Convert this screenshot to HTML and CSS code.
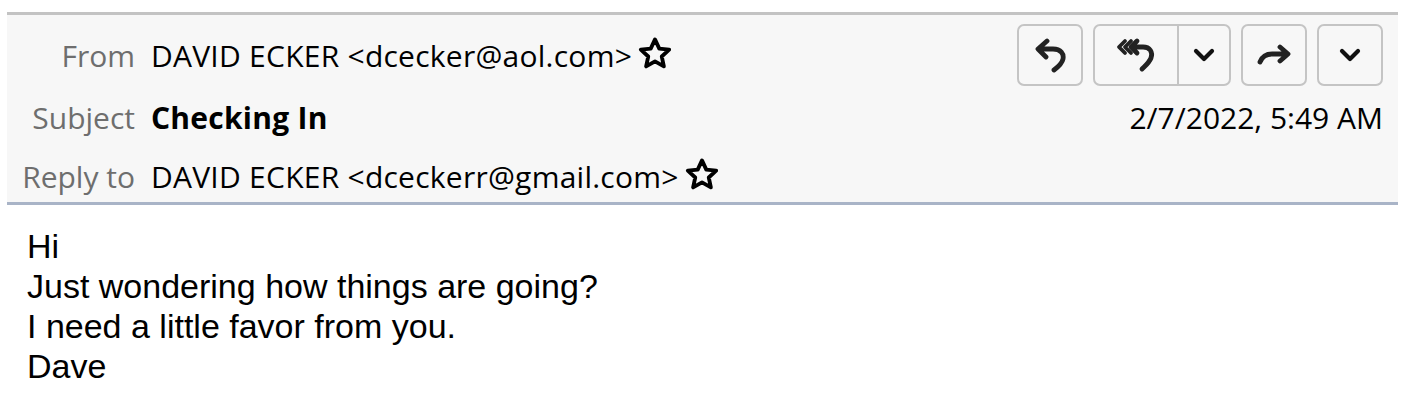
FILE: index.html
```html
<!DOCTYPE html>
<html>
<head>
<meta charset="utf-8">
<link rel="stylesheet" href="styles.css">
</head>
<body>
<div class="header">
  <div class="row row-from">
    <div class="label">From</div>
    <div class="value">DAVID ECKER &lt;dcecker@aol.com&gt;</div>
    <svg class="star" viewBox="0 0 32 32"><path d="M16 3 L19.8 11.2 L28.6 12.1 L22 18.2 L23.9 27 L16 22.5 L8.1 27 L10 18.2 L3.4 12.1 L12.2 11.2 Z" fill="none" stroke="#000" stroke-width="3.4" stroke-linejoin="round"/></svg>
    <div class="buttons">
      <button class="btn">
        <svg class="ico" width="32" height="36" viewBox="0 0 32 36"><path d="M13 4 L4 12 L12 20 M5 12 H19 C27 12 30 17 29 22 C28 27 24 30 20 33" fill="none" stroke="#222" stroke-width="4.8" stroke-linecap="round" stroke-linejoin="round"/></svg>
      </button>
      <div class="split">
        <button class="btn split-main">
          <svg class="ico" width="40" height="36" viewBox="0 0 40 36"><path d="M9 4 L3 10 L9 16 M15 4 L9 10 L15 16" fill="none" stroke="#222" stroke-width="3.8" stroke-linecap="round" stroke-linejoin="round"/><path d="M21 4 L15 10 L21 16 M16 10 H27 C34 10 37 15 35 21 C33 26 29 29 26 32" fill="none" stroke="#222" stroke-width="4.8" stroke-linecap="round" stroke-linejoin="round"/></svg>
        </button>
        <button class="btn split-drop">
          <svg class="chev" width="22" height="14" viewBox="0 0 22 14"><path d="M3 3 L11 11 L19 3" fill="none" stroke="#111" stroke-width="4.2" stroke-linecap="round" stroke-linejoin="round"/></svg>
        </button>
      </div>
      <button class="btn">
        <svg class="ico" width="36" height="24" viewBox="0 0 36 24"><path d="M24 4 L32 11 L24 18 M31 11 H16 C10 11 6 14 4 19" fill="none" stroke="#222" stroke-width="4.8" stroke-linecap="round" stroke-linejoin="round"/></svg>
      </button>
      <button class="btn">
        <svg class="chev" width="22" height="14" viewBox="0 0 22 14"><path d="M3 3 L11 11 L19 3" fill="none" stroke="#111" stroke-width="4.2" stroke-linecap="round" stroke-linejoin="round"/></svg>
      </button>
    </div>
  </div>
  <div class="row row-subject">
    <div class="label">Subject</div>
    <div class="value subject">Checking In</div>
    <div class="date">2/7/2022, 5:49 AM</div>
  </div>
  <div class="row row-reply">
    <div class="label">Reply to</div>
    <div class="value">DAVID ECKER &lt;dceckerr@gmail.com&gt;</div>
    <svg class="star" viewBox="0 0 32 32"><path d="M16 3 L19.8 11.2 L28.6 12.1 L22 18.2 L23.9 27 L16 22.5 L8.1 27 L10 18.2 L3.4 12.1 L12.2 11.2 Z" fill="none" stroke="#000" stroke-width="3.4" stroke-linejoin="round"/></svg>
  </div>
</div>
<div class="message">
  <div>Hi</div>
  <div>Just wondering how things are going?</div>
  <div>I need a little favor from you.</div>
  <div>Dave</div>
</div>
</body>
</html>
```

FILE: styles.css
```css
html, body {
  margin: 0;
  padding: 0;
  background: #ffffff;
}
body {
  padding-top: 12px;
}
.header {
  margin-left: 7px;
  width: 1391px;
  box-sizing: border-box;
  background: #f7f7f7;
  border-top: 3px solid #c3c3c3;
  border-bottom: 3px solid #a9b4c7;
  padding: 9px 15px 0 0;
  font-family: "Open Sans", "Noto Sans", sans-serif;
  font-size: 30px;
  color: #000;
}
.row {
  display: flex;
  align-items: center;
}
.row-from { height: 62px; }
.row-subject { height: 62px; }
.row-reply { height: 54px; padding-top: 2px; box-sizing: border-box; }
.label {
  width: 128px;
  text-align: right;
  color: #6e6e6e;
  margin-right: 16px;
}
.value {
  white-space: nowrap;
  letter-spacing: 0.25px;
}
.subject { font-weight: 700; }
.star {
  width: 36px;
  height: 36px;
  margin-left: 5px;
  margin-top: -3px;
}
.buttons {
  margin-left: auto;
  display: flex;
  gap: 10px;
}
.btn {
  height: 62px;
  width: 66px;
  box-sizing: border-box;
  border: 2px solid #c4c4c4;
  border-radius: 7px;
  background: #f7f7f7;
  display: flex;
  align-items: center;
  justify-content: center;
  padding: 0;
}
.split {
  display: flex;
  border: 2px solid #c4c4c4;
  border-radius: 7px;
  height: 62px;
  width: 138px;
  box-sizing: border-box;
}
.split .btn {
  border: none;
  height: 58px;
  border-radius: 0;
  background: transparent;
}
.split-main {
  width: 84px;
  border-right: 2px solid #c4c4c4 !important;
}
.split-drop { width: 50px; }
.date {
  margin-left: auto;
  white-space: nowrap;
}
.message {
  padding: 21px 0 0 27px;
  font-family: "Liberation Sans", Arial, sans-serif;
  font-size: 34px;
  line-height: 40px;
  color: #000;
}
```
